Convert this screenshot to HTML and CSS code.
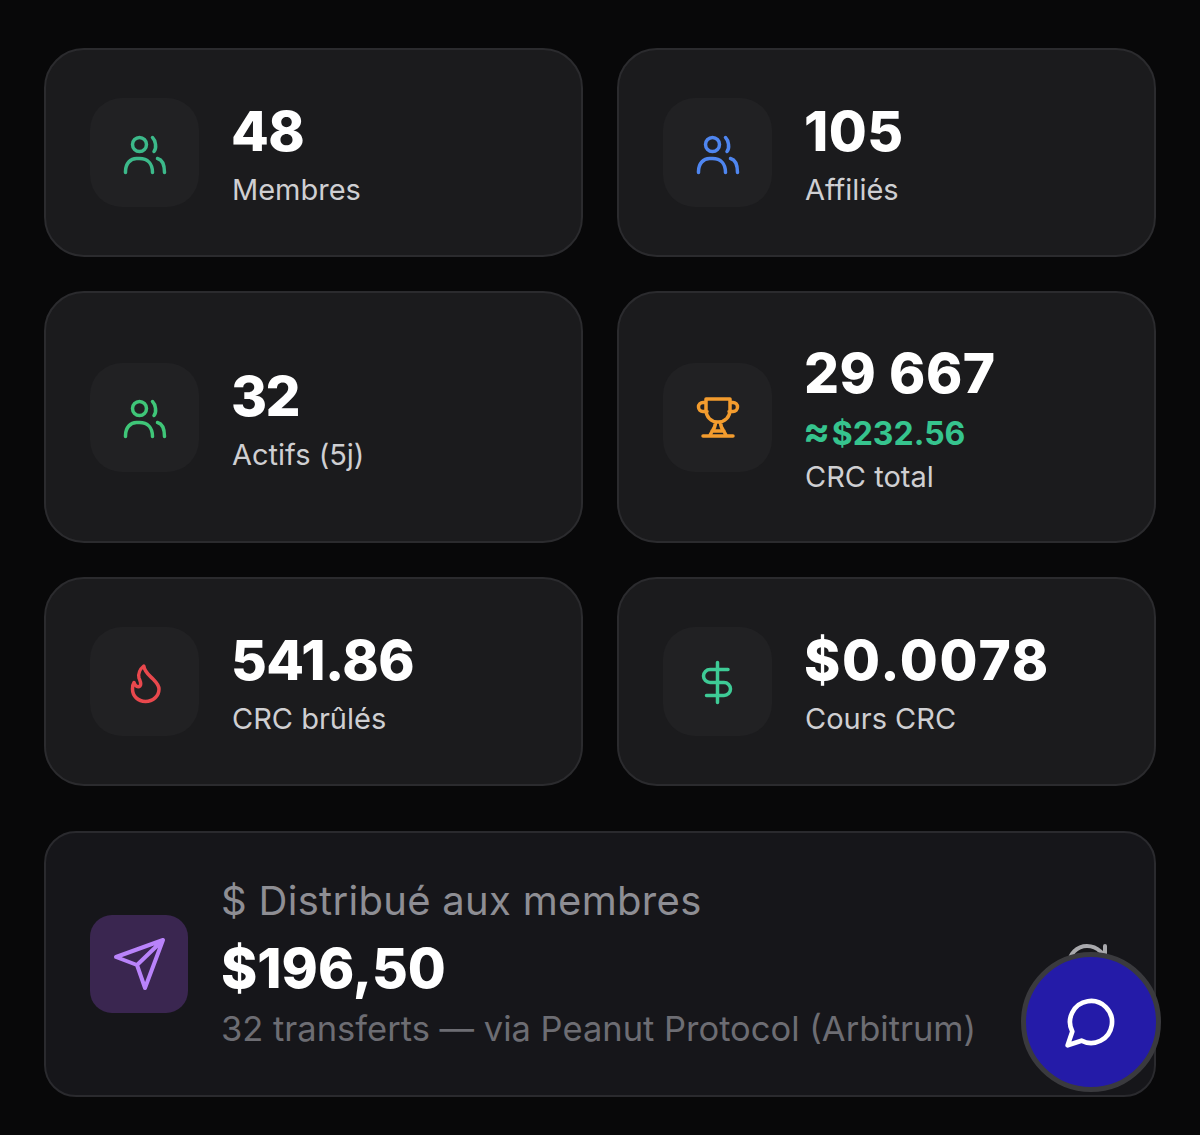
FILE: index.html
```
<!DOCTYPE html>
<html lang="fr">
<head>
<meta charset="utf-8">
<title>Statistiques</title>
<link rel="stylesheet" href="styles.css">
</head>
<body>
<main class="page">
  <section class="grid">
    <article class="card">
      <div class="icon-box">
        <svg class="icon green" viewBox="0 0 46 46"><circle cx="17.500" cy="14.500" r="7"/><path d="M30.500 7.500c3 3 4.500 10 1.500 14M3.500 42.500v-1c0-8 5-13 11-13h3c8 0 13 5 13 14M35.500 28.500c4 1 7 6 7 14"/></svg>
      </div>
      <div class="stat-text">
        <div class="stat-value">48</div>
        <div class="stat-label">Membres</div>
      </div>
    </article>
    <article class="card">
      <div class="icon-box">
        <svg class="icon blue" viewBox="0 0 46 46"><circle cx="17.500" cy="14.500" r="7"/><path d="M30.500 7.500c3 3 4.500 10 1.500 14M3.500 42.500v-1c0-8 5-13 11-13h3c8 0 13 5 13 14M35.500 28.500c4 1 7 6 7 14"/></svg>
      </div>
      <div class="stat-text">
        <div class="stat-value stat-value-mid">105</div>
        <div class="stat-label">Affiliés</div>
      </div>
    </article>
    <article class="card">
      <div class="icon-box">
        <svg class="icon green2" viewBox="0 0 46 46"><circle cx="17.500" cy="14.500" r="7"/><path d="M30.500 7.500c3 3 4.500 10 1.500 14M3.500 42.500v-1c0-8 5-13 11-13h3c8 0 13 5 13 14M35.500 28.500c4 1 7 6 7 14"/></svg>
      </div>
      <div class="stat-text">
        <div class="stat-value stat-value-narrow">32</div>
        <div class="stat-label">Actifs (5j)</div>
      </div>
    </article>
    <article class="card">
      <div class="icon-box">
        <svg class="icon orange" viewBox="0 0 46 46"><path d="M11 5h24v11c0 7-5 12-12 12s-12-5-12-12zM11 8.500H8a4.500 4.500 0 0 0 0 9h4M35 8.500h3a4.500 4.500 0 0 1 0 9h-4M20.500 28c0 4-1.500 7-3.500 9.500L14.500 42M25.500 28c0 4 1.500 7 3.500 9.500L31.500 42M17 37h12M8 42h30"/></svg>
      </div>
      <div class="stat-text">
        <div class="stat-value stat-value-mid stat-value-tight">29 667</div>
        <div class="stat-approx"><span class="approx-sign">≈</span> $232.56</div>
        <div class="stat-label">CRC total</div>
      </div>
    </article>
    <article class="card">
      <div class="icon-box">
        <svg class="icon red" viewBox="0 0 46 46"><path d="M21.800 7c.7 6 5.200 9 9.200 13 4 4 6 7 6 10 0 7-6 12.500-13.500 12.500S10.500 37 10.500 30c0-3 .5-5 1.500-6.500 1 3.500 4 5.500 6 3.500s0-5-1-8c-1-4 1-9 4.800-12z"/></svg>
      </div>
      <div class="stat-text">
        <div class="stat-value">541.86</div>
        <div class="stat-label">CRC brûlés</div>
      </div>
    </article>
    <article class="card">
      <div class="icon-box">
        <svg class="icon mint" viewBox="0 0 46 46"><path d="M22.500 3.500v40M33 10.500H15a6.500 6.500 0 0 0 0 13h14a6.500 6.500 0 0 1 0 13H11.500"/></svg>
      </div>
      <div class="stat-text">
        <div class="stat-value stat-value-wide">$0.0078</div>
        <div class="stat-label">Cours CRC</div>
      </div>
    </article>
  </section>
  <section class="summary">
    <div class="summary-icon">
      <svg class="icon-send" viewBox="0 0 56 56"><path d="M52 4 5 21l21 8 8 23zM26 29 52 4"/></svg>
    </div>
    <div class="summary-text">
      <div class="summary-label">$ Distribué aux membres</div>
      <div class="summary-value">$196,50</div>
      <div class="summary-sub">32 transferts — via Peanut Protocol (Arbitrum)</div>
    </div>
    <svg class="icon-refresh" viewBox="0 0 24 24"><path d="M21 12a9 9 0 1 1-9-9c2.520 0 4.930 1 6.740 2.740L21 8"/><path d="M21 3v5h-5"/></svg>
  </section>
</main>
<button class="fab" type="button" aria-label="Chat">
  <svg class="icon-chat" viewBox="0 0 24 24"><path d="M7.900 20A9 9 0 1 0 4 16.100L2 22Z"/></svg>
</button>
</body>
</html>
```
FILE: styles.css
```
* { box-sizing: border-box; }
html, body { margin: 0; height: 100%; }
body {
  background: #080809;
  color: #fff;
  font-family: Inter, "Liberation Sans", sans-serif;
  position: relative;
  overflow: hidden;
}
.page { padding: 48px 44px 38px; }
.grid {
  display: grid;
  grid-template-columns: 1fr 1fr;
  gap: 34px;
}
.card {
  display: flex;
  align-items: center;
  gap: 33px;
  padding: 48px 44px;
  background: #1b1b1d;
  border: 2px solid #2b2b2e;
  border-radius: 40px;
}
.icon-box {
  width: 109px;
  height: 109px;
  flex: none;
  display: flex;
  align-items: center;
  justify-content: center;
  background: #212123;
  border-radius: 32px;
}
.icon {
  width: 46px;
  height: 46px;
  fill: none;
  stroke: currentColor;
  stroke-width: 3.500;
  stroke-linecap: round;
  stroke-linejoin: round;
}
.green { color: #3cb98a; }
.blue { color: #4f86f0; }
.green2 { color: #3fc678; }
.orange { color: #f39c2e; }
.red { color: #e9484d; }
.mint { color: #3ecb96; }
.stat-text { display: flex; flex-direction: column; }
.stat-value {
  font-size: 55px;
  font-weight: 800;
  line-height: 65px;
  margin: 0 0 10px -1px;
  letter-spacing: -0.5px;
}
.stat-value-mid { letter-spacing: 0.5px; }
.stat-value-wide { letter-spacing: 1.800px; }
.stat-value-narrow { letter-spacing: -1.500px; }
.stat-value-tight { margin-bottom: 8px; }
.stat-approx {
  font-size: 32px;
  font-weight: 700;
  line-height: 40px;
  color: #36c48e;
  margin: 0 0 7px -2px;
  word-spacing: -6px;
}
.approx-sign { font-size: 40px; line-height: 32px; }
.stat-label {
  font-size: 29px;
  line-height: 32px;
  color: #cfcfd2;
}
.summary {
  display: flex;
  align-items: center;
  gap: 33px;
  margin-top: 45px;
  height: 266px;
  padding: 0 43px 0 44px;
  background: #16161a;
  border: 2px solid #2a2a2e;
  border-radius: 32px;
}
.summary-icon {
  width: 98px;
  height: 98px;
  flex: none;
  display: flex;
  align-items: center;
  justify-content: center;
  background: #3a2650;
  border-radius: 22px;
}
.icon-send {
  width: 56px;
  height: 56px;
  fill: none;
  stroke: #b983fb;
  stroke-width: 4;
  stroke-linejoin: round;
  stroke-linecap: round;
}
.summary-text { display: flex; flex-direction: column; flex: 1; padding-top: 2px; }
.summary-label {
  font-size: 40px;
  letter-spacing: 0.300px;
  line-height: 46px;
  color: #8e8e94;
}
.summary-value {
  font-size: 55px;
  font-weight: 800;
  line-height: 66px;
  margin-top: 11px;
}
.summary-sub {
  font-size: 34.500px;
  line-height: 46px;
  margin-top: 5px;
  color: #6d6d73;
}
.icon-refresh {
  width: 48px;
  height: 48px;
  flex: none;
  fill: none;
  stroke: #a9a9ad;
  stroke-width: 2;
  stroke-linecap: round;
  stroke-linejoin: round;
}
.fab {
  position: absolute;
  right: 39px;
  bottom: 43px;
  width: 140px;
  height: 140px;
  padding: 0;
  display: flex;
  align-items: center;
  justify-content: center;
  background: #241ba8;
  border: 5px solid #3a3a3e;
  border-radius: 50%;
}
.icon-chat {
  width: 56px;
  height: 56px;
  fill: none;
  stroke: #fff;
  stroke-width: 2;
  stroke-linecap: round;
  stroke-linejoin: round;
}
```
